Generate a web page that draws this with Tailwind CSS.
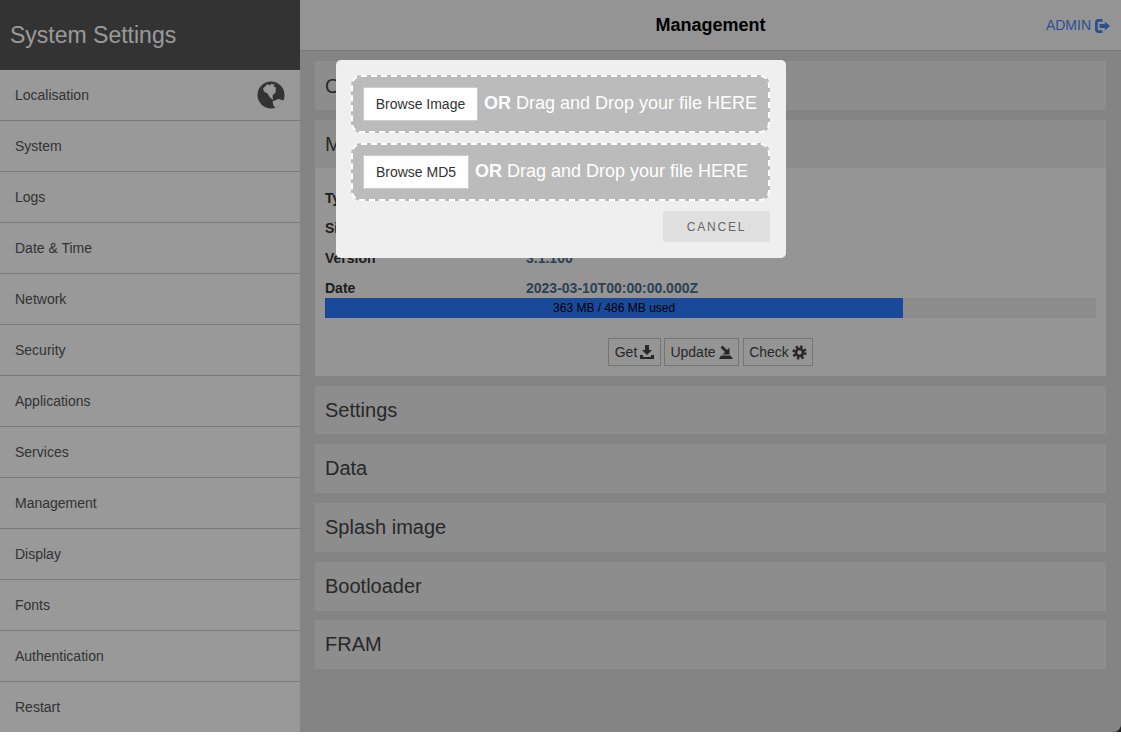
<!DOCTYPE html>
<html lang="en">
<head>
    <meta charset="UTF-8">
    <title>System Settings</title>
    <script src="https://cdn.jsdelivr.net/npm/@tailwindcss/browser@4"></script>
</head>
<body class="bg-white font-['Liberation_Sans',Arial,sans-serif] overflow-hidden">
    <div class="w-[1121px] h-[732px] bg-[#222222]">
    <div class="relative w-[1121px] h-[732px] flex overflow-hidden rounded-br-[8px] bg-[#dcdcdc]">
        <!-- sidebar -->
        <div class="w-[300px] shrink-0 flex flex-col bg-white">
            <div class="h-[70px] shrink-0 bg-[#555555] text-white text-[23px] flex items-center pl-[10px]">System Settings</div>
            <div class="h-[51px] shrink-0 border-b border-[#cccccc] pl-[15px] pr-[15px] flex items-center justify-between text-[14px] text-[#555555]">
                <span>Localisation</span>
                <svg class="w-[28px] h-[28px] text-[#555555]" viewBox="0 0 28 28"><circle cx="14" cy="14" r="13.500" fill="currentColor"/><path fill="#ffffff" d="M6 7.500 10.500 3l2 1.500L14 3l3.500.5-1 2 2.500 1-.5 5-3 3 .5 4.500-3-2.500-2.500-4L7 10.500zM15.500 20.500l6-2.500 5 1.500-2.500 4.500-5.500 3-2-2.500z"/></svg>
            </div>
            <div class="h-[51px] shrink-0 border-b border-[#cccccc] pl-[15px] flex items-center text-[14px] text-[#555555]">System</div>
            <div class="h-[51px] shrink-0 border-b border-[#cccccc] pl-[15px] flex items-center text-[14px] text-[#555555]">Logs</div>
            <div class="h-[51px] shrink-0 border-b border-[#cccccc] pl-[15px] flex items-center text-[14px] text-[#555555]">Date &amp; Time</div>
            <div class="h-[51px] shrink-0 border-b border-[#cccccc] pl-[15px] flex items-center text-[14px] text-[#555555]">Network</div>
            <div class="h-[51px] shrink-0 border-b border-[#cccccc] pl-[15px] flex items-center text-[14px] text-[#555555]">Security</div>
            <div class="h-[51px] shrink-0 border-b border-[#cccccc] pl-[15px] flex items-center text-[14px] text-[#555555]">Applications</div>
            <div class="h-[51px] shrink-0 border-b border-[#cccccc] pl-[15px] flex items-center text-[14px] text-[#555555]">Services</div>
            <div class="h-[51px] shrink-0 border-b border-[#cccccc] pl-[15px] flex items-center text-[14px] text-[#555555]">Management</div>
            <div class="h-[51px] shrink-0 border-b border-[#cccccc] pl-[15px] flex items-center text-[14px] text-[#555555]">Display</div>
            <div class="h-[51px] shrink-0 border-b border-[#cccccc] pl-[15px] flex items-center text-[14px] text-[#555555]">Fonts</div>
            <div class="h-[51px] shrink-0 border-b border-[#cccccc] pl-[15px] flex items-center text-[14px] text-[#555555]">Authentication</div>
            <div class="h-[51px] shrink-0 pl-[15px] flex items-center text-[14px] text-[#555555]">Restart</div>
        </div>

        <!-- main -->
        <div class="flex-1 flex flex-col">
            <div class="relative h-[51px] shrink-0 bg-[#f7f7f7] border-b border-[#cccccc] flex items-center justify-center text-[18px] font-bold text-black">
                Management
                <div class="absolute right-[11px] top-[15px] flex items-center gap-[4px] text-[14px] font-normal text-[#4488f5]">
                    ADMIN
                    <svg class="w-[15px] h-[14px]" viewBox="0 0 15 14" fill="currentColor"><path d="M7.500 0v2.800H3.800c-.6 0-1 .4-1 1v6.400c0 .6.4 1 1 1h3.700V14H3.400C1.500 14 0 12.500 0 10.600V3.400C0 1.500 1.500 0 3.400 0z"/><path d="M9.800 2.500 15 7l-5.200 4.500V9H4.500V5h5.300z"/></svg>
                </div>
            </div>
            <div class="flex-1 px-[15px] pt-[10px] flex flex-col gap-[10px]">
                <div class="h-[49px] bg-[#ececec] pl-[10px] flex items-center text-[20px] text-[#444444]">Overview</div>
                <div class="h-[256px] bg-[#f8f8f8] flex flex-col">
                    <div class="h-[48px] shrink-0 pl-[10px] flex items-center text-[20px] text-[#444444] bg-[#ececec]">Management</div>
                    <div class="px-[10px] flex-1">
                        <div class="mt-[15px] h-[30px] flex items-center text-[14px] font-bold"><span class="w-[201px] text-[#333333]">Type</span><span class="text-[#4a6d8c]">CM4</span></div>
                        <div class="h-[30px] flex items-center text-[14px] font-bold"><span class="w-[201px] text-[#333333]">Size</span><span class="text-[#4a6d8c]">32 GB</span></div>
                        <div class="h-[30px] flex items-center text-[14px] font-bold"><span class="w-[201px] text-[#333333]">Version</span><span class="text-[#4a6d8c]">3.1.100</span></div>
                        <div class="h-[30px] flex items-center text-[14px] font-bold"><span class="w-[201px] text-[#333333]">Date</span><span class="text-[#4a6d8c]">2023-03-10T00:00:00.000Z</span></div>
                        <div class="-mt-[5px] h-[20px] bg-[#ececec]">
                            <div class="h-full w-[75%] bg-[#2d7bff] flex items-center justify-center text-[12px] text-black">363 MB / 486 MB used</div>
                        </div>
                        <div class="mt-[20px] flex justify-center gap-[3px] text-[14px] text-[#444444]">
                            <div class="w-[53px] h-[28px] border border-[#c4c4c4] flex items-center justify-center gap-[3px]">Get
                                <svg class="w-[14px] h-[14px]" viewBox="0 0 14 14" fill="currentColor"><path d="M5 0h4v5h3L7 10 2 5h3z"/><path d="M0 10h3v2h8v-2h3v4H0z"/></svg>
                            </div>
                            <div class="w-[75px] h-[28px] border border-[#c4c4c4] flex items-center justify-center gap-[3px]">Update
                                <svg class="w-[14px] h-[14px]" viewBox="0 0 14 14" fill="currentColor"><path d="M1.500 2.500 3.500.5 8 5l2.500-2.500v7h-7L6 7z"/><path d="M2 10.500h9.500L14 14H0z"/></svg>
                            </div>
                            <div class="ml-[1px] w-[70px] h-[28px] border border-[#c4c4c4] flex items-center justify-center gap-[3px]">Check
                                <svg class="w-[15px] h-[15px]" viewBox="0 0 16 16" fill="none" stroke="currentColor"><circle cx="8" cy="8" r="6.300" stroke-width="2.600" stroke-dasharray="2.600 2.350"/><circle cx="8" cy="8" r="3.800" stroke-width="3"/></svg>
                            </div>
                        </div>
                    </div>
                </div>
                <div class="h-[48px] bg-[#ececec] pl-[10px] flex items-center text-[20px] text-[#444444]">Settings</div>
                <div class="h-[49px] bg-[#ececec] pl-[10px] pb-[1px] flex items-center text-[20px] text-[#444444]">Data</div>
                <div class="h-[49px] bg-[#ececec] pl-[10px] pb-[1px] flex items-center text-[20px] text-[#444444]">Splash image</div>
                <div class="h-[49px] bg-[#ececec] pl-[10px] pb-[1px] flex items-center text-[20px] text-[#444444]">Bootloader</div>
                <div class="-mt-[1px] h-[49px] bg-[#ececec] pl-[10px] pb-[1px] flex items-center text-[20px] text-[#444444]">FRAM</div>
            </div>
        </div>

        <!-- overlay -->
        <div class="absolute inset-0 bg-black/40"></div>

        <!-- upload dialog -->
        <div class="absolute left-[336px] top-[60px] w-[450px] h-[198px] bg-[#efefef] rounded-[5px] pl-[15px] pr-[16px] pt-[15px]">
            <div class="h-[58px] border-2 border-dashed border-white rounded-[10px] bg-[#bbbbbb] pl-[10px] flex items-center gap-[6px]">
                <div class="w-[115px] h-[34px] bg-white border border-[#cccccc] flex items-center justify-center text-[14px] text-[#333333]">Browse Image</div>
                <span class="-mt-[2px] text-[18px] text-white whitespace-nowrap"><b>OR</b> Drag and Drop your file HERE</span>
            </div>
            <div class="mt-[10px] h-[58px] border-2 border-dashed border-white rounded-[10px] bg-[#bbbbbb] pl-[10px] flex items-center gap-[6px]">
                <div class="w-[106px] h-[34px] bg-white border border-[#cccccc] flex items-center justify-center text-[14px] text-[#333333]">Browse MD5</div>
                <span class="-mt-[2px] text-[18px] text-white whitespace-nowrap"><b>OR</b> Drag and Drop your file HERE</span>
            </div>
            <div class="mt-[10px] flex justify-end">
                <div class="w-[107px] h-[31px] bg-[#e0e0e0] rounded-[2px] flex items-center justify-center text-[12px] tracking-[1.8px] text-[#666666]">CANCEL</div>
            </div>
        </div>
    </div>
    </div>
</body>
</html>
